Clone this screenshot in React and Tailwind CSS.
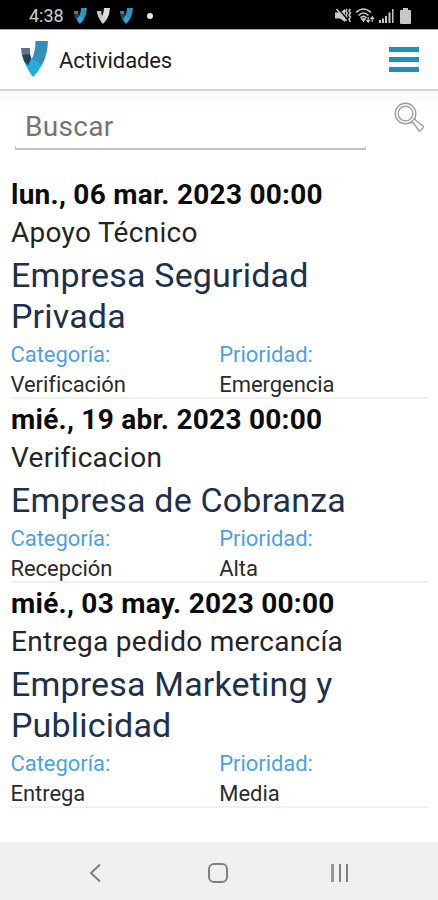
import React from "react";

const activities = [
  {
    date: "lun., 06 mar. 2023 00:00",
    title: "Apoyo Técnico",
    company: ["Empresa Seguridad", "Privada"],
    category: "Verificación",
    priority: "Emergencia",
  },
  {
    date: "mié., 19 abr. 2023 00:00",
    title: "Verificacion",
    company: ["Empresa de Cobranza"],
    category: "Recepción",
    priority: "Alta",
  },
  {
    date: "mié., 03 may. 2023 00:00",
    title: "Entrega pedido mercancía",
    company: ["Empresa Marketing y", "Publicidad"],
    category: "Entrega",
    priority: "Media",
  },
];

const Logo = ({ className, left = "#5d7486", dark = "#2c4054", right = "#3590b5", tip = "#22aede" }) => (
  <svg className={className} viewBox="0 0 27 36" preserveAspectRatio="none">
    <path d="M0 7 H9 V18 L7 26 L3 20 Q0 14 0 7 Z" fill={left} />
    <path d="M1.500 14 L9 13 L10.500 18 L7 26 L3 20 Z" fill={dark} />
    <path d="M14.500 0 H27 Q26.500 14 21 24 L8 24 L11 17.500 Q14.500 10 14.500 0 Z" fill={right} />
    <path d="M3.500 21 L7 24.500 L11 17.500 L21 24 Q17 31 12 36 Q7 30 3.500 21 Z" fill={tip} />
  </svg>
);

const StatusBar = () => (
  <div className="h-[29px] shrink-0 bg-black flex items-center justify-between pl-[29px] pr-[27px] pt-[2px]">
    <div className="flex items-center">
      <span className="w-[45px] text-[18px] leading-none text-[#d0d0d0]">4:38</span>
      <Logo className="w-[13px] h-[16px]" />
      <Logo className="w-[13px] h-[16px] ml-[10px]" left="#c9c9c9" dark="#c9c9c9" right="#dddddd" tip="#d3d3d3" />
      <Logo className="w-[13px] h-[16px] ml-[10px]" />
      <span className="w-[6px] h-[6px] ml-[14px] rounded-full bg-[#e5e5e5]" />
    </div>
    <div className="flex items-center text-[#c8c8c8]">
      <svg className="w-[17px] h-[15px]" viewBox="0 0 17 15" fill="none" stroke="currentColor" strokeWidth="1.5">
        <path d="M0 4.500 H5 L10 1 V14 L5 10.500 H0 Z" fill="currentColor" stroke="none" />
        <path d="M3.500 1 L13 12" stroke="#000" strokeWidth="1.200" />
        <path d="M1.500 1 L11.500 13" />
        <path d="M12 1 L10.800 3 L12.200 5 L11 7 L12.200 9 M15.300 1 L14 3 L15.500 5 L14 7 L15.500 9 L14 11 L15.300 14" />
      </svg>
      <svg className="w-[20px] h-[15px] ml-[3px]" viewBox="0 0 20 15" fill="none" stroke="currentColor" strokeWidth="1.6">
        <path d="M1 4.500 Q8.500 -2.500 16 4.500 M3.500 7.500 Q8.500 2.500 13.500 7.500 M5.500 9.800 Q8.500 6.800 11.500 9.800" />
        <path d="M7 11 L8.500 13 L10 11 Z" fill="currentColor" />
        <path d="M13.200 9 V14 M11.500 12 L13.200 14 L14.900 12 M17.200 14 V9 M15.500 11 L17.200 9 L18.900 11" strokeWidth="1.2" />
      </svg>
      <svg className="w-[15px] h-[15px] ml-[4px]" viewBox="0 0 15 15" fill="currentColor">
        <path d="M0 12h2v3H0zM3 10.500h2V15H3zM6 8h2v7H6zM9.500 4.500h2V15h-2zM13 1h1.500v14H13z" />
      </svg>
      <svg className="w-[11px] h-[16px] ml-[6px]" viewBox="0 0 11 16" fill="currentColor">
        <path d="M3 0h5v2h2.200q.8 0 .8.800V15q0 1-1 1H1q-1 0-1-1V2.800Q0 2 .8 2H3z" />
      </svg>
    </div>
  </div>
);

const Header = () => (
  <header className="h-[62px] shrink-0 flex items-center border-t border-b-2 border-t-[#aaa] border-b-[#d4d4d4] pl-[21px] pr-[19px]">
    <Logo className="w-[27px] h-[36px] -mt-[2px]" />
    <h1 className="ml-[11px] mt-[2px] text-[22px] leading-none tracking-[-0.1px] text-[#1c1c1c] flex-1">Actividades</h1>
    <div className="flex flex-col gap-[5px] -mt-px">
      <span className="w-[30px] h-[5px] bg-[#1b93b8]" />
      <span className="w-[30px] h-[5px] bg-[#1b93b8]" />
      <span className="w-[30px] h-[5px] bg-[#1b93b8]" />
    </div>
  </header>
);

const SearchRow = () => (
  <div className="h-[83px] shrink-0 flex items-start justify-between pl-[15px] pr-[13px] bg-linear-to-b from-[#f8f8f8] to-white to-20%">
    <div className="w-[351px] mt-[15px]">
      <div className="h-[40px] pl-[10px] text-[28px] leading-[42px] tracking-[0.3px] text-[#747474]">Buscar</div>
      <div className="h-[4px] border-x border-b-2 border-[#c4c4c4]" />
    </div>
    <svg className="w-[31px] h-[31px] mt-[11px]" viewBox="0 0 31 31" fill="none" stroke="#a0a0a0" strokeWidth="1.4">
      <circle cx="11.500" cy="11.500" r="10.300" />
      <circle cx="11.500" cy="11.500" r="7.300" />
      <path d="M17 20.500 L19.500 21 L24.800 28.500 Q25.500 29.500 26.500 28.500 L29 26 Q30 25 29 24 L21.800 18.500 L21 16.500" strokeLinejoin="round" />
    </svg>
  </div>
);

const Field = ({ label, value }) => (
  <div className="w-[209px] text-[22px] leading-[30px] tracking-[-0.05px]">
    <p className="text-[#4f9fe3]">{label}</p>
    <p className="text-[#2b2b2b]">{value}</p>
  </div>
);

const Activity = ({ date, title, company, category, priority }) => (
  <li className="ml-[11px] mr-[10px] pt-[2px] border-b-2 border-[#f0f0f0] whitespace-nowrap">
    <p className="text-[28px] leading-[38px] tracking-[0.26px] font-bold text-[#0c0c0c]">{date}</p>
    <p className="text-[28px] leading-[38px] tracking-[0.29px] text-[#242424]">{title}</p>
    <div className="pt-[3px] text-[34px] leading-[41px] tracking-[0.17px] text-[#20304a]">
      {company.map((line) => (
        <p key={line}>{line}</p>
      ))}
    </div>
    <div className="h-[60px] mt-[3px] -mb-[3px] -ml-[0.5px] flex">
      <Field label="Categoría:" value={category} />
      <Field label="Prioridad:" value={priority} />
    </div>
  </li>
);

const NavBar = () => (
  <nav className="h-[58px] shrink-0 bg-[#f0f0f0] flex items-center pl-[89px] pt-[3px] text-[#808080]">
    <svg className="w-[12px] h-[20px]" viewBox="0 0 12 20" fill="none" stroke="currentColor" strokeWidth="2">
      <path d="M11 1.500 L2 10 L11 18.500" />
    </svg>
    <span className="w-[20px] h-[20px] ml-[107px] rounded-[6px] border-2 border-current" />
    <div className="flex gap-[5px] ml-[103px]">
      <span className="w-[3px] h-[18px] bg-[#979797]" />
      <span className="w-[2px] h-[18px] bg-current" />
      <span className="w-[2px] h-[18px] bg-current" />
    </div>
  </nav>
);

const App = () => {
  return (
    <div className="w-[438px] h-[900px] overflow-hidden bg-white flex flex-col font-['Roboto',sans-serif]">
      <StatusBar />
      <Header />
      <SearchRow />
      <ul className="flex-1">
        {activities.map((item) => (
          <Activity key={item.date} {...item} />
        ))}
      </ul>
      <NavBar />
    </div>
  );
};

export default App;
